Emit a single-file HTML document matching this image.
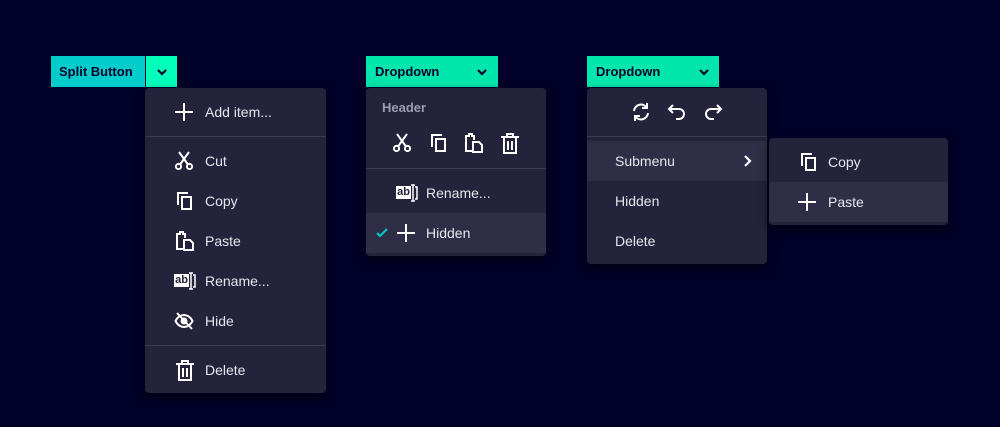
<!DOCTYPE html>
<html><head><meta charset="utf-8"><style>
*{margin:0;padding:0;box-sizing:border-box}
body{width:1000px;height:427px;background:#000028;font-family:"Liberation Sans",sans-serif;position:relative;overflow:hidden;color:#e6e6ee}
.abs{position:absolute}
.btn{position:absolute;height:31px;color:#000028;font-weight:bold;font-size:13px;line-height:31px}
.menu{position:absolute;background:#23233c;border-radius:4px;box-shadow:0 4px 10px rgba(0,0,0,.6)}
.item{position:absolute;left:0;right:0;height:40px;font-size:14px;line-height:40px}
.item span{position:absolute}
.div{position:absolute;left:0;right:0;height:1px;background:#3c3c55}
.hl{background:#2e2e46}
svg{position:absolute}
svg *{fill:none;stroke:#fff;stroke-width:2}
</style></head><body>

<!-- Split button -->
<div class="btn" style="left:51px;top:56px;width:94px;background:#00cccc;padding-left:8px">Split Button</div>
<div class="btn" style="left:146px;top:56px;width:31px;background:#00ffb9"></div>
<svg style="left:155px;top:65px" width="14" height="14" viewBox="0 0 14 14"><path d="M3 5l4 4 4-4" style="stroke:#000028;stroke-width:2.2"/></svg>

<div class="menu" style="left:145px;top:88px;width:181px;height:305px">
 <div class="item" style="top:4px"><svg style="left:29px;top:10px" width="20" height="20" viewBox="0 0 20 20"><path d="M10 1v18M1 10h18"/></svg><span style="left:60px">Add item...</span></div>
 <div class="div" style="top:48px"></div>
 <div class="item" style="top:53px"><svg style="left:29px;top:10px" width="20" height="20" viewBox="0 0 20 20"><circle cx="4.5" cy="15.5" r="2.6"/><circle cx="15.5" cy="15.5" r="2.6"/><path d="M6 13.5L15 1M14 13.5L5 1"/></svg><span style="left:60px">Cut</span></div>
 <div class="item" style="top:93px"><svg style="left:30px;top:10px" width="20" height="20" viewBox="0 0 20 20"><path d="M3 14V2h10"/><rect x="7" y="6" width="9" height="12"/></svg><span style="left:60px">Copy</span></div>
 <div class="item" style="top:133px"><svg style="left:30px;top:9px" width="20" height="22" viewBox="0 0 20 22"><path d="M10 8V4h-2V2H5v2H2v15h6"/><path d="M9 10h6l3 3v7H9z"/></svg><span style="left:60px">Paste</span></div>
 <div class="item" style="top:173px"><div class="abs" style="left:29px;top:13px;width:15px;height:13px;background:#fff;color:#23233c;font-size:11px;line-height:13px;font-weight:bold;text-align:center">ab</div><svg style="left:43px;top:10px" width="8" height="20" viewBox="0 0 8 20"><path d="M1 2h4M3 2v16M1 18h4M5 4h2v12h-2" style="stroke-width:1.5"/></svg><span style="left:60px">Rename...</span></div>
 <div class="item" style="top:213px"><svg style="left:29px;top:10px" width="20" height="20" viewBox="0 0 20 20"><path d="M1.5 10C4 5 8 4 10 4s6 1 8.5 6C16 15 12 16 10 16s-6-1-8.5-6z"/><circle cx="10" cy="10" r="2.5" style="fill:#fff"/><path d="M3 2l15 16"/></svg><span style="left:60px">Hide</span></div>
 <div class="div" style="top:257px"></div>
 <div class="item" style="top:262px"><svg style="left:31px;top:10px" width="18" height="21" viewBox="0 0 18 21"><path d="M0 4h18M6 4V1h6v3M3 4v16h12V4M7 8v9M11 8v9"/></svg><span style="left:60px">Delete</span></div>
</div>

<!-- Dropdown 1 -->
<div class="btn" style="left:366px;top:56px;width:132px;background:#00e6ad;padding-left:9px">Dropdown</div>
<svg style="left:475px;top:65px" width="14" height="14" viewBox="0 0 14 14"><path d="M3 5l4 4 4-4" style="stroke:#000028;stroke-width:2.2"/></svg>
<div class="menu" style="left:366px;top:88px;width:180px;height:168px">
 <div class="abs" style="left:16px;top:12px;font-size:13px;color:#9d9db0;font-weight:bold">Header</div>
 <svg style="left:26px;top:45px" width="20" height="20" viewBox="0 0 20 20"><circle cx="4.5" cy="15.5" r="2.6"/><circle cx="15.5" cy="15.5" r="2.6"/><path d="M6 13.5L15 1M14 13.5L5 1"/></svg>
 <svg style="left:63px;top:45px" width="20" height="20" viewBox="0 0 20 20"><path d="M3 14V2h10"/><rect x="7" y="6" width="9" height="12"/></svg>
 <svg style="left:98px;top:44px" width="20" height="22" viewBox="0 0 20 22"><path d="M10 8V4h-2V2H5v2H2v15h6"/><path d="M9 10h6l3 3v7H9z"/></svg>
 <svg style="left:135px;top:45px" width="18" height="21" viewBox="0 0 18 21"><path d="M0 4h18M6 4V1h6v3M3 4v16h12V4M7 8v9M11 8v9"/></svg>
 <div class="div" style="top:80px"></div>
 <div class="item" style="top:85px"><div class="abs" style="left:30px;top:13px;width:15px;height:13px;background:#fff;color:#23233c;font-size:11px;line-height:13px;font-weight:bold;text-align:center">ab</div><svg style="left:44px;top:10px" width="8" height="20" viewBox="0 0 8 20"><path d="M1 2h4M3 2v16M1 18h4M5 4h2v12h-2" style="stroke-width:1.5"/></svg><span style="left:60px">Rename...</span></div>
 <div class="item hl" style="top:125px"><svg style="left:10px;top:15px" width="12" height="10" viewBox="0 0 12 10"><path d="M1 5l3 3 7-7" style="stroke:#00cccc"/></svg><svg style="left:30px;top:10px" width="20" height="20" viewBox="0 0 20 20"><path d="M10 1v18M1 10h18"/></svg><span style="left:60px">Hidden</span></div>
</div>

<!-- Dropdown 2 -->
<div class="btn" style="left:587px;top:56px;width:132px;background:#00e6ad;padding-left:9px">Dropdown</div>
<svg style="left:697px;top:65px" width="14" height="14" viewBox="0 0 14 14"><path d="M3 5l4 4 4-4" style="stroke:#000028;stroke-width:2.2"/></svg>
<div class="menu" style="left:587px;top:88px;width:180px;height:176px">
 <svg style="left:44px;top:14px" width="20" height="20" viewBox="0 0 20 20"><path d="M3 9a7 7 0 0 1 13-3M17 11a7 7 0 0 1-13 3M16 1v5h-5M4 19v-5h5"/></svg>
 <svg style="left:80px;top:14px" width="20" height="20" viewBox="0 0 20 20"><path d="M6 3L2 7l4 4M2 7h10a5 5 0 0 1 0 10H9"/></svg>
 <svg style="left:116px;top:14px" width="20" height="20" viewBox="0 0 20 20"><path d="M14 3l4 4-4 4M18 7H8a5 5 0 0 0 0 10h3"/></svg>
 <div class="div" style="top:48px"></div>
 <div class="item hl" style="top:53px"><span style="left:28px">Submenu</span><svg style="left:156px;top:14px" width="10" height="12" viewBox="0 0 10 12"><path d="M2 1l5 5-5 5" style="stroke-width:2.2"/></svg></div>
 <div class="item" style="top:93px"><span style="left:28px">Hidden</span></div>
 <div class="item" style="top:133px"><span style="left:28px">Delete</span></div>
</div>
<div class="menu" style="left:769px;top:138px;width:179px;height:87px">
 <div class="item" style="top:4px"><svg style="left:30px;top:10px" width="20" height="20" viewBox="0 0 20 20"><path d="M3 14V2h10"/><rect x="7" y="6" width="9" height="12"/></svg><span style="left:59px">Copy</span></div>
 <div class="item hl" style="top:44px"><svg style="left:28px;top:10px" width="20" height="20" viewBox="0 0 20 20"><path d="M10 1v18M1 10h18"/></svg><span style="left:59px">Paste</span></div>
</div>
</body></html>
